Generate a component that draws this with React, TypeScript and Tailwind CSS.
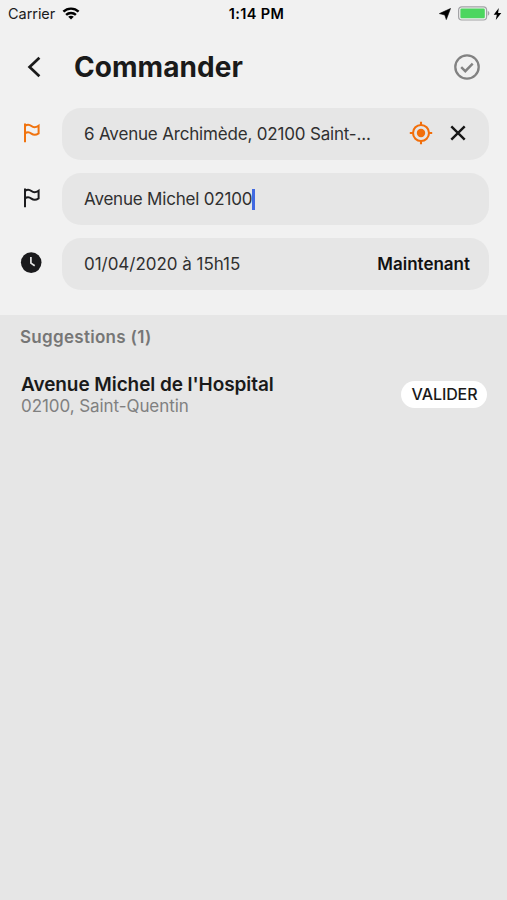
import type { ReactNode } from 'react';

function FlagIcon({ className }: { className: string }) {
  return (
    <svg className={className} width="24" height="24" viewBox="0 0 24 24" fill="none" stroke="currentColor" strokeWidth="2">
      <path d="M6 2.4V21.2" />
      <path d="M6 5C8.8 2.8 10.6 3.6 12.4 5.1S16.4 6.9 19.6 4.7V12.4C16.6 14.5 14.4 14.1 12.4 12.6S8.8 10.3 6 12.5" />
    </svg>
  );
}

function ClockIcon() {
  return (
    <svg width="22" height="22" viewBox="0 0 22 22" fill="none">
      <circle cx="11.2" cy="10.6" r="10.3" fill="#1a1a1c" />
      <path d="M10.9 4.9V11.1L14.7 13.8" stroke="#e6e6e6" strokeWidth="1.7" />
    </svg>
  );
}

function TargetIcon() {
  return (
    <svg width="24" height="24" viewBox="0 0 24 24" fill="none" stroke="#f26e0a" strokeWidth="2.1">
      <circle cx="12" cy="12" r="8" />
      <circle cx="12" cy="12" r="4.2" fill="#f26e0a" stroke="none" />
      <path d="M12 .8V4M12 20v3.2M.8 12H4M20 12h3.2" />
    </svg>
  );
}

function StatusBar() {
  return (
    <div className="grid h-[27px] grid-cols-3 items-center pl-2 pr-[5px] text-[#1b1b1b]">
      <div className="flex items-center gap-[7px]">
        <span className="pt-px text-[14.5px] leading-[18px] tracking-[-0.05px]">Carrier</span>
        <svg width="18" height="13" viewBox="0 0 17 13" fill="none" stroke="#000" strokeWidth="2.4">
          <path d="M.9 4.7C5.1.6 11.9.6 16.1 4.7" />
          <path d="M3.6 7.9C6.3 5.3 10.7 5.3 13.4 7.9" />
          <path d="M8.5 12.6L5.7 9.8C7.2 8.4 9.8 8.4 11.3 9.8Z" fill="#000" stroke="none" />
        </svg>
      </div>
      <span className="pl-[3px] pt-px text-center text-[14.5px] font-semibold leading-[18px] tracking-[0.4px] text-black">1:14 PM</span>
      <div className="flex items-center justify-end">
        <svg width="12" height="12" viewBox="0 0 12 12">
          <path d="M11.5.5L7.3 11.6L5.8 7L.4 5.6Z" fill="#000" stroke="#000" strokeWidth=".6" />
        </svg>
        <svg className="ml-[7px]" width="32" height="15" viewBox="0 0 32 15">
          <rect x=".6" y=".8" width="28" height="13.2" rx="3.2" fill="#f1f1f1" stroke="#a3a3a6" strokeWidth="1.2" />
          <rect x="2.4" y="2.6" width="24.4" height="9.6" rx="1.2" fill="#4cd65f" />
          <path d="M29.8 5.1C31.9 5.8 31.9 9 29.8 9.7Z" fill="#a3a3a6" />
        </svg>
        <svg className="ml-[3px]" width="9" height="12" viewBox="0 0 9 12">
          <path d="M5.8 0L.7 6.7H3.8L2.8 12L8.3 5H5.1Z" fill="#000" />
        </svg>
      </div>
    </div>
  );
}

function Field({ icon, children }: { icon: ReactNode; children: ReactNode }) {
  return (
    <div className="flex h-[52px] items-center">
      <div className="flex w-[62px] justify-center pb-[2px] pr-px">{icon}</div>
      <div className="flex h-full flex-1 items-center rounded-[19px] bg-[#e6e6e6] pl-[22px] pr-[19px] text-[17px] text-[#303030]">
        {children}
      </div>
    </div>
  );
}

export default function App() {
  return (
    <div className="flex h-screen w-full flex-col overflow-hidden bg-[#e6e6e6] font-['Inter',sans-serif]">
      <div className="h-[315px] bg-[#f1f1f1]">
        <StatusBar />
        <header className="flex h-[81px] items-center pb-[2px] pr-[26px]">
          <button className="ml-[27px] flex w-[47px]" aria-label="Retour">
            <svg width="14" height="22" viewBox="0 0 14 22" fill="none" stroke="#1a1a1a" strokeWidth="2.7">
              <path d="M12.4 1.8L2.6 11L12.4 20.2" />
            </svg>
          </button>
          <h1 className="flex-1 text-[28px] font-bold leading-9 tracking-[0.05px] text-[#1a1a1a]">Commander</h1>
          <svg width="28" height="28" viewBox="0 0 28 28" fill="none" stroke="#828282" strokeWidth="2.3">
            <circle cx="14" cy="14" r="11.7" />
            <path d="M8.2 14.2L12.3 18.2L19.7 10.6" strokeWidth="2.4" />
          </svg>
        </header>
        <div className="flex flex-col gap-[13px] pr-[18px]">
          <Field icon={<FlagIcon className="text-[#f0730f]" />}>
            <span className="flex-1 whitespace-nowrap pt-[2px] tracking-[-0.18px]">6 Avenue Archimède, 02100 Saint-...</span>
            <div className="flex items-center pb-[2px]">
              <TargetIcon />
              <svg className="ml-[17px] mr-[4px]" width="16" height="16" viewBox="0 0 16 16" fill="none" stroke="#171717" strokeWidth="2.4">
                <path d="M1.3 1.3L14.7 14.7M14.7 1.3L1.3 14.7" />
              </svg>
            </div>
          </Field>
          <Field icon={<FlagIcon className="text-[#1c1c1e]" />}>
            <span className="whitespace-nowrap pt-[2px] tracking-[-0.2px]">Avenue Michel 02100</span>
            <span className="h-[21px] w-[2.5px] bg-[#4169e1]" />
          </Field>
          <Field icon={<ClockIcon />}>
            <span className="flex-1 whitespace-nowrap pt-[2px] tracking-[-0.03px]">01/04/2020 à 15h15</span>
            <span className="pt-[2px] font-semibold text-[#111]">Maintenant</span>
          </Field>
        </div>
      </div>
      <section className="px-5 pt-[10px]">
        <h2 className="text-[17px] font-semibold leading-6 tracking-[0.3px] text-[#767676]">Suggestions (1)</h2>
        <div className="mt-[23px] flex items-center justify-between pl-px">
          <div>
            <p className="text-[19px] font-semibold leading-[25px] tracking-[-0.08px] text-[#1a1a1a]">Avenue Michel de l'Hospital</p>
            <p className="text-[17px] leading-[19px] tracking-[-0.07px] text-[#808080]">02100, Saint-Quentin</p>
          </div>
          <button className="h-[27px] w-[86px] rounded-full bg-white pl-px text-[16px] font-medium leading-[26px] tracking-[-0.1px] text-[#1a1a1a]">VALIDER</button>
        </div>
      </section>
    </div>
  );
}
